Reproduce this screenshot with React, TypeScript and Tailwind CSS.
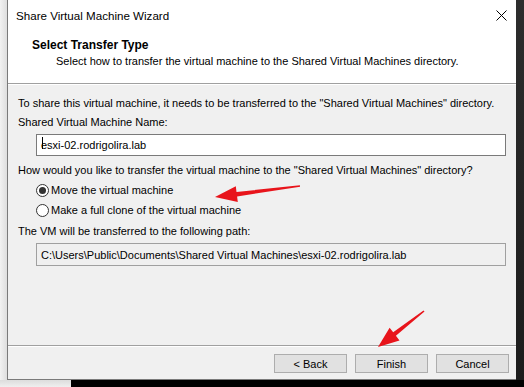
import React from 'react';

type Pt = [number, number];

function arrowPoints(tail: Pt, tip: Pt, headLen: number, headHalf: number, tailHalf: number, neckHalf: number) {
  const dx = tip[0] - tail[0];
  const dy = tip[1] - tail[1];
  const len = Math.hypot(dx, dy);
  const ux = dx / len;
  const uy = dy / len;
  const px = -uy;
  const py = ux;
  const bx = tip[0] - ux * headLen;
  const by = tip[1] - uy * headLen;
  const pts: Pt[] = [
    [tail[0] + px * tailHalf, tail[1] + py * tailHalf],
    [bx + px * neckHalf, by + py * neckHalf],
    [bx + px * headHalf, by + py * headHalf],
    tip,
    [bx - px * headHalf, by - py * headHalf],
    [bx - px * neckHalf, by - py * neckHalf],
    [tail[0] - px * tailHalf, tail[1] - py * tailHalf],
  ];
  return pts.map((p) => `${p[0].toFixed(1)},${p[1].toFixed(1)}`).join(' ');
}

function Radio({ checked, label }: { checked?: boolean; label: string }) {
  return (
    <div className="flex items-center h-[16px]">
      <span className="w-[13px] h-[13px] rounded-full border border-[#333] bg-white flex items-center justify-center">
        {checked && <span className="w-[7px] h-[7px] rounded-full bg-[#333]" />}
      </span>
      <span className="ml-[2px]">{label}</span>
    </div>
  );
}

function Button({ children }: { children: React.ReactNode }) {
  return (
    <div className="w-[73px] h-[19px] border border-[#adadad] bg-[#e1e1e1] flex items-center justify-center">
      {children}
    </div>
  );
}

export default function App() {
  return (
    <div className="relative w-[524px] h-[387px] flex flex-col bg-black overflow-hidden font-['Liberation_Sans',Arial,sans-serif] text-[11px] leading-[14px] text-black">
      <div className="flex h-[380px]">
        <div className="w-[7px] bg-gradient-to-r from-[#f2f2f2] to-[#dedede]" />
        <div className="w-[509px] flex flex-col border-l border-b border-[#7a7a7a] bg-[#f0f0f0]">
          {/* title bar */}
          <div className="h-[31px] bg-white flex items-center justify-between pl-[8px] pr-[9px]">
            <span className="text-[11.6px] text-black">Share Virtual Machine Wizard</span>
            <svg width="11" height="11" viewBox="0 0 11 11">
              <path d="M0.5 0.5 L10.5 10.5 M10.5 0.5 L0.5 10.5" stroke="#000" strokeWidth="1" />
            </svg>
          </div>
          {/* header */}
          <div className="h-[52px] bg-white pt-[7px]">
            <div className="pl-[24px] font-bold text-[12px]">Select Transfer Type</div>
            <div className="pl-[48px] mt-[2px]">
              Select how to transfer the virtual machine to the Shared Virtual Machines directory.
            </div>
          </div>
          <div className="border-t border-[#a0a0a0] border-b border-b-white" />
          {/* content */}
          <div className="flex-1 flex flex-col px-[10px] pt-[11px]">
            <div>To share this virtual machine, it needs to be transferred to the "Shared Virtual Machines" directory.</div>
            <div className="mt-[5px]">Shared Virtual Machine Name:</div>
            <div className="ml-[18px] mt-[5px] h-[22px] border border-[#7a7a7a] bg-white flex items-center pl-[4px]">
              <span className="relative">
                <span className="absolute left-[1px] top-[-1px] w-px h-[12px] bg-black" />
                esxi-02.rodrigolira.lab
              </span>
            </div>
            <div className="mt-[7px]">How would you like to transfer the virtual machine to the "Shared Virtual Machines" directory?</div>
            <div className="ml-[18px] mt-[5px] flex flex-col gap-[4px]">
              <Radio checked label="Move the virtual machine" />
              <Radio label="Make a full clone of the virtual machine" />
            </div>
            <div className="mt-[6px]">The VM will be transferred to the following path:</div>
            <div className="ml-[18px] mt-[5px] h-[23px] border border-[#a0a0a0] bg-[#f0f0f0] flex items-center pl-[4px]">
              C:\Users\Public\Documents\Shared Virtual Machines\esxi-02.rodrigolira.lab
            </div>
          </div>
          <div className="border-t border-[#a0a0a0] border-b border-b-white" />
          {/* buttons */}
          <div className="h-[32px] flex justify-end gap-[8px] pr-[7px] pt-[7px]">
            <Button>&lt; Back</Button>
            <Button>Finish</Button>
            <Button>Cancel</Button>
          </div>
        </div>
        <div className="w-[8px] bg-gradient-to-b from-[#2d2d2d] to-[#1c1c1c]" />
      </div>
      <div className="flex h-[7px]">
        <div className="w-[71px] bg-gradient-to-b from-[#dcdcdc] to-[#efefef]" />
        <div className="flex-1 bg-black" />
      </div>

      <svg className="absolute left-0 top-0 pointer-events-none" width="524" height="387" viewBox="0 0 524 387">
        <polygon points={arrowPoints([300, 186], [215, 197], 22, 8, 0.8, 2.2)} fill="#e8141b" />
        <polygon points={arrowPoints([424, 311], [378, 347], 21, 8, 0.8, 2.2)} fill="#e8141b" />
      </svg>
    </div>
  );
}
